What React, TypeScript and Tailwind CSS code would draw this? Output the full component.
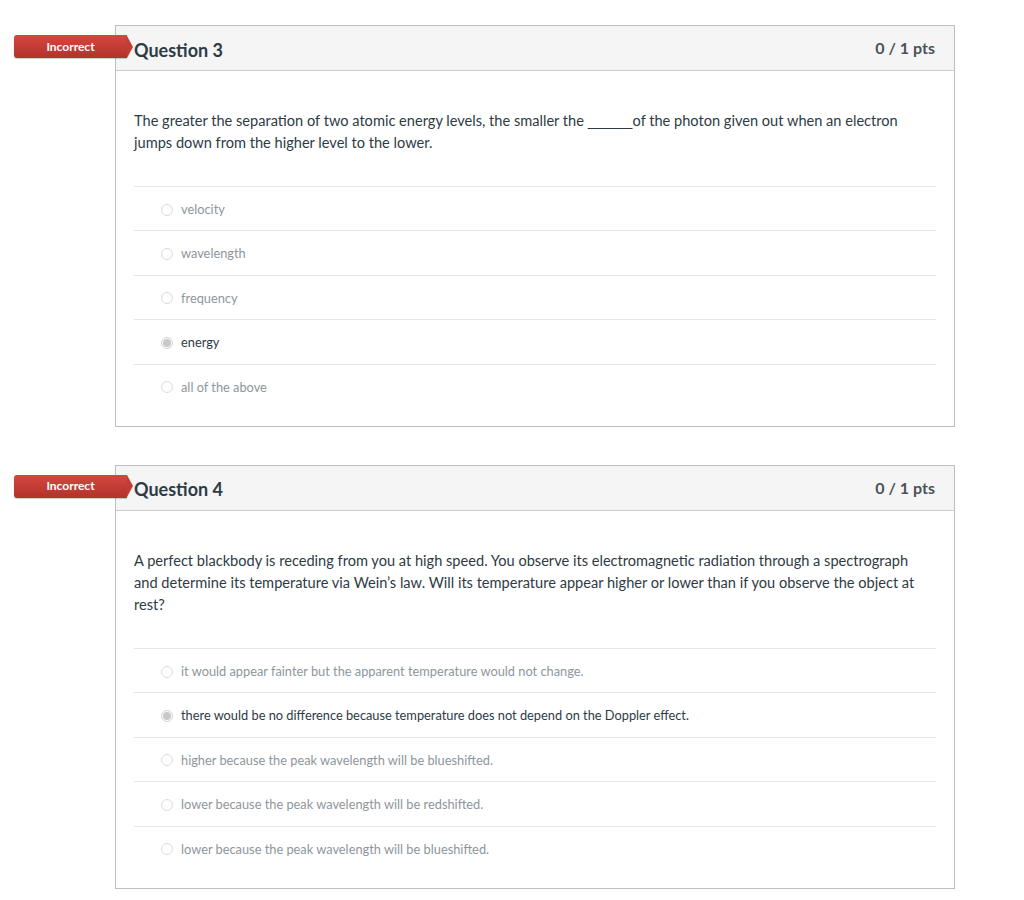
type Question = {
  num: number;
  text: React.ReactNode;
  answers: string[];
  selected: number;
};

const questions: Question[] = [
  {
    num: 3,
    text: (
      <>
        The greater the separation of two atomic energy levels, the smaller the{" "}
        <span className="underline decoration-1 underline-offset-2">{"\u00a0".repeat(12)}</span>of the photon given out
        when an electron jumps down from the higher level to the lower.
      </>
    ),
    answers: ["velocity", "wavelength", "frequency", "energy", "all of the above"],
    selected: 3,
  },
  {
    num: 4,
    text: (
      <>
        A perfect blackbody is receding from you at high speed. You observe its electromagnetic radiation through a
        spectrograph and determine its temperature via Wein’s law. Will its temperature appear higher or lower than if
        you observe the object at rest?
      </>
    ),
    answers: [
      "it would appear fainter but the apparent temperature would not change.",
      "there would be no difference because temperature does not depend on the Doppler effect.",
      "higher because the peak wavelength will be blueshifted.",
      "lower because the peak wavelength will be redshifted.",
      "lower because the peak wavelength will be blueshifted.",
    ],
    selected: 1,
  },
];

function Badge() {
  return (
    <div className="absolute left-[-102px] top-[9px] flex items-center">
      <div className="w-[113px] h-[23px] rounded-l-[3px] bg-gradient-to-b from-[#d4483e] to-[#b3322b] text-white text-[12px] font-bold flex items-center justify-center shadow-[0_1px_1px_rgba(0,0,0,0.2)]">
        Incorrect
      </div>
      <div className="w-0 h-0 border-y-[11.5px] border-y-transparent border-l-[6px] border-l-[#c23d34]" />
    </div>
  );
}

function Radio({ on }: { on: boolean }) {
  return on ? (
    <span className="w-[12px] h-[12px] rounded-full border border-[#d0d0d0] bg-white flex items-center justify-center">
      <span className="w-[8px] h-[8px] rounded-full bg-[#c9c9c9]" />
    </span>
  ) : (
    <span className="w-[12px] h-[12px] rounded-full border border-[#dcdcdc] bg-white" />
  );
}

function QuestionCard({ q }: { q: Question }) {
  return (
    <div className="relative w-[840px] border border-[#b9bfc4] bg-white">
      <Badge />
      <div className="h-[45px] bg-[#f5f5f5] border-b border-[#c7cdd1] flex items-center justify-between px-[18px] text-[#2d3b45]">
        <span className="text-[18px] font-bold mt-[4px]">Question {q.num}</span>
        <span className="text-[16px] font-bold text-[#4a5258] mr-[1px]">0 / 1 pts</span>
      </div>
      <div className="px-[18px] pt-[39px] pb-[18px]">
        <p className="text-[14.6px] leading-[22px] text-[#2d3b45] pr-[18px]">{q.text}</p>
        <div className="mt-[32px]">
          {q.answers.map((a, i) => (
            <div key={i} className="h-[44.4px] border-t border-[#e6e6e6] flex items-center gap-[8px] pl-[27px] pt-[2px]">
              <Radio on={i === q.selected} />
              <span className={`text-[12.8px] ${i === q.selected ? "text-[#2d3b45]" : "text-[#8d969c]"}`}>{a}</span>
            </div>
          ))}
        </div>
      </div>
    </div>
  );
}

export default function App() {
  return (
    <div className="min-h-[900px] bg-white pt-[25px] pl-[115px] font-['Lato',sans-serif]">
      <div className="flex flex-col gap-[38px]">
        {questions.map((q) => (
          <QuestionCard key={q.num} q={q} />
        ))}
      </div>
    </div>
  );
}
